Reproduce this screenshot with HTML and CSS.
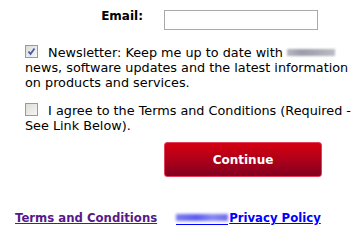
FILE: index.html
```html
<!DOCTYPE html>
<html>
<head>
<meta charset="utf-8">
<link rel="stylesheet" href="styles.css">
</head>
<body>
<div class="form">
  <div class="email-row">
    <label class="email-label">Email:</label>
    <span class="email-input"></span>
  </div>
  <div class="option first">
    <span class="cb"><svg width="11" height="11" viewBox="0 0 11 11"><path d="M2.5 5.5 L4.5 8 L8.5 2.5" fill="none" stroke="#4a5aa8" stroke-width="1.8"/></svg></span>
    <span class="opt-text">Newsletter: Keep me up to date with <span class="blur"></span> news, software updates and the latest information on products and services.</span>
  </div>
  <div class="option second">
    <span class="cb"></span>
    <span class="opt-text">I agree to the Terms and Conditions (Required - See Link Below).</span>
  </div>
  <div class="actions">
    <span class="btn">Continue</span>
  </div>
  <div class="links">
    <a class="link visited" href="#">Terms and Conditions</a>
    <a class="link" href="#"><span class="blur-link"><span class="blur-shape"></span></span>Privacy Policy</a>
  </div>
</div>
</body>
</html>
```
FILE: styles.css
```css
html, body {
  margin: 0;
  padding: 0;
  background: #fff;
}
body {
  font-family: "DejaVu Sans", Verdana, sans-serif;
  font-size: 12.8px;
  color: #000;
}
.form {
  width: 362px;
  height: 243px;
}
.email-row {
  display: flex;
  align-items: flex-start;
  padding-top: 10px;
}
.email-label {
  width: 143px;
  text-align: right;
  font-weight: bold;
  font-size: 12px;
  margin-top: -1px;
}
.email-input {
  margin-left: 21px;
  width: 152px;
  height: 18px;
  border: 1px solid #a9a9a9;
  background: #fff;
}
.option {
  padding-left: 25px;
  padding-right: 6px;
  line-height: 15px;
}
.option.first {
  margin-top: 15px;
}
.option.second {
  margin-top: 13px;
}
.cb {
  display: inline-block;
  width: 11px;
  height: 11px;
  border: 1px solid #9a9a9a;
  background: linear-gradient(135deg, #dcdcd8, #f6f6f4);
  vertical-align: -1px;
  margin-right: 6px;
}
.cb svg {
  display: block;
}
.blur {
  display: inline-block;
  width: 48px;
  height: 7px;
  background: linear-gradient(90deg, #b8b8c2, #9c9cac 30%, #a8a8b4 60%, #bcbcc6);
  filter: blur(1.3px);
  vertical-align: 1px;
}
.actions {
  padding-left: 164px;
  margin-top: 9px;
}
.btn {
  display: flex;
  align-items: center;
  justify-content: center;
  width: 156px;
  height: 33px;
  border: 1px solid #e0405a;
  border-radius: 3px;
  background: linear-gradient(#d4000f, #b0001a 50%, #82001f);
  color: #fff;
  font-weight: bold;
  font-size: 12px;
}
.links {
  display: flex;
  margin-top: 34px;
  padding-left: 15px;
  gap: 19px;
  font-weight: bold;
  font-size: 11.7px;
}
.link {
  color: #0000ff;
  text-decoration: underline;
}
.link.visited {
  color: #551a8b;
}
.blur-link {
  display: inline-block;
  width: 52px;
  height: 12px;
  border-bottom: 1px solid #0000ff;
  vertical-align: -3px;
  margin-right: 1px;
}
.blur-shape {
  display: block;
  margin-top: 2px;
  height: 7px;
  background: linear-gradient(90deg, #7a7af0, #5c5cf0 40%, #8888f2 70%, #6a6aee);
  filter: blur(1.5px);
}
```
